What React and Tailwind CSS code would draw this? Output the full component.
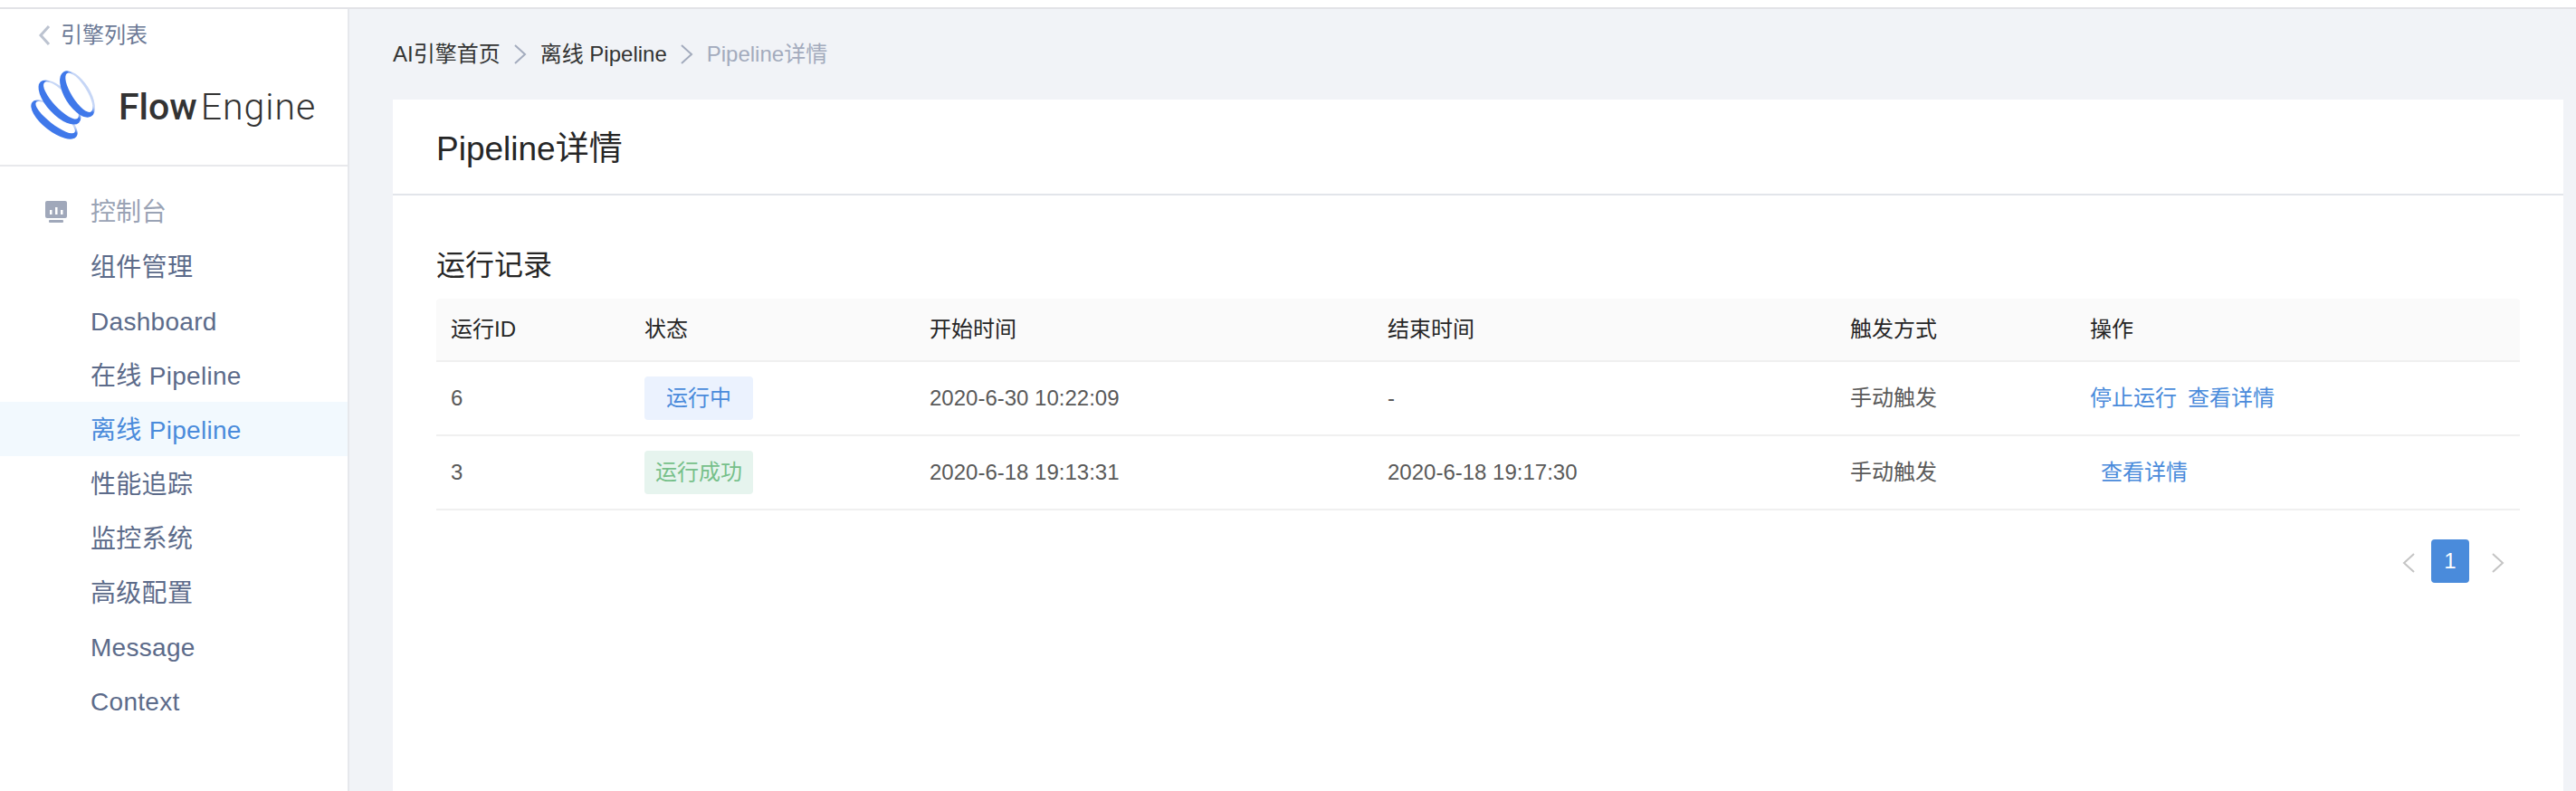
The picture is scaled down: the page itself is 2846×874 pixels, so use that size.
import React from 'react';

const menu = ['组件管理', 'Dashboard', '在线 Pipeline', '离线 Pipeline', '性能追踪', '监控系统', '高级配置', 'Message', 'Context'];
const columns = ['运行ID', '状态', '开始时间', '结束时间', '触发方式', '操作'];
const gridCols = 'grid grid-cols-[214px_315px_506px_511px_265px_1fr] items-center pl-4 border-b-2 border-[#f0f0f0]';

function Logo() {
  // three tilted rings, back to front
  const ring = (cx, cy, rx, ry, rot) => (
    <g transform={`rotate(${rot} ${cx} ${cy})`}>
      <ellipse cx={cx} cy={cy} rx={rx} ry={ry} fill="url(#ringFill)" />
      <ellipse cx={cx + 2.5} cy={cy - 0.5} rx={rx - 5.5} ry={ry - 4} fill="#ffffff" />
    </g>
  );
  return (
    <svg width="90" height="90" viewBox="0 0 90 90" className="-mx-[6px] shrink-0">
      <defs>
        <linearGradient id="ringFill" x1="0" y1="0" x2="1" y2="0">
          <stop offset="0.62" stopColor="#3f78ea" />
          <stop offset="0.78" stopColor="#c6d6f6" />
        </linearGradient>
      </defs>
      {ring(30, 62, 13, 31, -52)}
      {ring(36, 43, 14, 31, -43)}
      {ring(55.5, 34, 14, 29, -32)}
    </svg>
  );
}

function Crumb() {
  return (
    <svg width="16" height="24" viewBox="0 0 16 24" className="mx-[14px] shrink-0" fill="none" stroke="#a3abbd" strokeWidth="2">
      <polyline points="2,2 13,12 2,22" />
    </svg>
  );
}

function Sidebar() {
  return (
    <aside className="w-[386px] shrink-0 bg-white border-r-2 border-[#e6e8ec]">
      <div className="h-[174px] border-b-2 border-[#e8e9ec]">
        <div className="flex items-center pl-[42px] pt-[14px] h-[44px] text-[24px] text-[#6c7a96]">
          <svg width="14" height="24" viewBox="0 0 14 24" className="mr-[11px]" fill="none" stroke="#bcc3d0" strokeWidth="3">
            <polyline points="12,2 3,12 12,22" />
          </svg>
          引擎列表
        </div>
        <div className="flex items-center pl-[36px] mt-[16px]">
          <Logo />
          <span className="ml-[17px] mt-[7px] text-[41px] leading-none text-[#333333] font-['Roboto',sans-serif] font-medium">Flow</span>
          <span className="ml-[4px] mt-[7px] text-[41px] leading-none tracking-[1px] text-[#333333] font-['Roboto',sans-serif] font-light">Engine</span>
        </div>
      </div>
      <nav className="pt-5">
        <div className="flex items-center h-[60px] pl-[50px] text-[28px] text-[#9aa3b5]">
          <svg width="24" height="24" viewBox="0 0 24 24" className="mr-[26px]" fill="#a0a8ba">
            <path d="M2 0h20a2 2 0 0 1 2 2v15a2 2 0 0 1-2 2H2a2 2 0 0 1-2-2V2a2 2 0 0 1 2-2z" />
            <rect x="4" y="21" width="16" height="3" rx="1" />
            <rect x="5" y="10" width="2.5" height="5" fill="#fff" />
            <rect x="11" y="7" width="2.5" height="8" fill="#fff" />
            <rect x="17" y="10" width="2.5" height="5" fill="#fff" />
          </svg>
          <span className="pt-[2px]">控制台</span>
        </div>
        {menu.map((item) => (
          <div
            key={item}
            className={`flex items-center h-[60px] pl-[100px] pt-[3px] text-[28px] tracking-[0.3px] ${
              item === '离线 Pipeline' ? 'bg-[#f2f9fe] text-[#4a8bdb]' : 'text-[#5c6b8a]'
            }`}
          >
            {item}
          </div>
        ))}
      </nav>
    </aside>
  );
}

function RunTable() {
  return (
    <div className="text-[24px]">
      <div className={`${gridCols} h-[70px] bg-[#fafafa] text-[#262626] rounded-t-[4px]`}>
        {columns.map((c) => (
          <div key={c}>{c}</div>
        ))}
      </div>
      <div className={`${gridCols} h-[82px] text-[#595959]`}>
        <div>6</div>
        <div>
          <span className="flex items-center justify-center w-[120px] h-[48px] rounded-[4px] bg-[#ebf2fe] text-[#4a8bdb]">运行中</span>
        </div>
        <div>2020-6-30 10:22:09</div>
        <div>-</div>
        <div>手动触发</div>
        <div className="text-[#4a8bdb]">
          <span>停止运行</span>
          <span className="ml-3">查看详情</span>
        </div>
      </div>
      <div className={`${gridCols} h-[82px] text-[#595959]`}>
        <div>3</div>
        <div>
          <span className="flex items-center justify-center w-[120px] h-[48px] rounded-[4px] bg-[#e6f4ee] text-[#76c08a]">运行成功</span>
        </div>
        <div>2020-6-18 19:13:31</div>
        <div>2020-6-18 19:17:30</div>
        <div>手动触发</div>
        <div className="text-[#4a8bdb]">
          <span className="ml-3">查看详情</span>
        </div>
      </div>
    </div>
  );
}

function Pagination() {
  return (
    <div className="flex items-center justify-end mt-8 pr-[17px]">
      <svg width="14" height="22" viewBox="0 0 14 22" className="mt-1" fill="none" stroke="#c4c4c4" strokeWidth="2">
        <polyline points="13,1 2,11 13,21" />
      </svg>
      <div className="flex items-center justify-center w-[42px] h-[48px] mx-[18px] rounded-[4px] bg-[#4a8bdb] text-white text-[24px]">1</div>
      <svg width="14" height="22" viewBox="0 0 14 22" className="ml-[7px] mt-1" fill="none" stroke="#c4c4c4" strokeWidth="2">
        <polyline points="1,1 12,11 1,21" />
      </svg>
    </div>
  );
}

export default function App() {
  return (
    <div className="h-screen overflow-hidden flex flex-col bg-white font-['Liberation_Sans','Noto_Sans_CJK_SC',sans-serif]">
      <div className="h-[10px] shrink-0 border-b-2 border-[#e2e3e7]" />
      <div className="flex flex-1 min-h-0">
        <Sidebar />
        <main className="flex-1 bg-[#f1f3f7] pl-[48px] pr-[14px]">
          <div className="flex items-center h-[100px] text-[24px] text-[#333333]">
            <span>AI引擎首页</span>
            <Crumb />
            <span>离线 Pipeline</span>
            <Crumb />
            <span className="text-[#a3abbd]">Pipeline详情</span>
          </div>
          <div className="bg-white h-[900px]">
            <div className="flex items-center h-[106px] pl-[48px] pt-[5px] border-b-2 border-[#e2e5ea] text-[37px] text-[#262626]">
              Pipeline详情
            </div>
            <div className="px-[48px]">
              <h2 className="flex items-center h-[114px] pt-[40px] text-[32px] text-[#262626]">运行记录</h2>
              <RunTable />
              <Pagination />
            </div>
          </div>
        </main>
      </div>
    </div>
  );
}
